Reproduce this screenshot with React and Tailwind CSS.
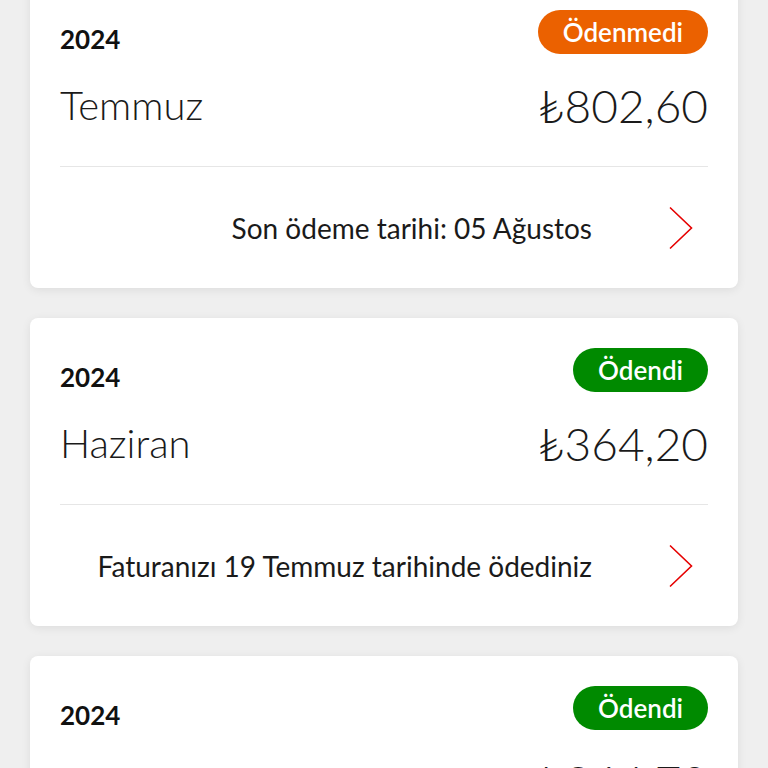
const bills = [
  {
    year: "2024",
    month: "Temmuz",
    amount: "₺802,60",
    status: "Ödenmedi",
    paid: false,
    note: "Son ödeme tarihi: 05 Ağustos",
  },
  {
    year: "2024",
    month: "Haziran",
    amount: "₺364,20",
    status: "Ödendi",
    paid: true,
    note: "Faturanızı 19 Temmuz tarihinde ödediniz",
  },
  {
    year: "2024",
    month: "Mayıs",
    amount: "₺364,70",
    status: "Ödendi",
    paid: true,
    note: "Faturanızı 18 Haziran tarihinde ödediniz",
  },
];

function Chevron() {
  return (
    <svg width="26" height="44" viewBox="0 0 26 44" fill="none" className="shrink-0">
      <path d="M2 1.5 L23.5 22 L2 42.5" stroke="#e60000" strokeWidth="1.6" />
    </svg>
  );
}

function BillCard({ bill }) {
  return (
    <div className="bg-white rounded-[8px] shadow-[0_2px_10px_rgba(0,0,0,0.08)] px-[30px] pt-[30px] h-[308px] flex flex-col">
      <div className="flex items-end justify-between">
        <span className="text-[26px] leading-none font-bold text-[#111] pb-[2px]">{bill.year}</span>
        <span
          className={`h-[44px] px-[25px] rounded-full flex items-center text-white text-[26px] font-semibold ${
            bill.paid ? "bg-[#008a00]" : "bg-[#eb6100]"
          }`}
        >
          {bill.status}
        </span>
      </div>
      <div className="flex items-center justify-between mt-[25px] h-[52px]">
        <span className="text-[40px] font-light text-[#1a1a1a]">{bill.month}</span>
        <span className="text-[46px] font-light text-[#1a1a1a]">{bill.amount}</span>
      </div>
      <div className="border-t border-[#e6e6e6] mt-[35px]" />
      <div className="flex-1 flex items-center justify-end gap-[76px] pr-[14px]">
        <span className="text-[28px] text-[#1a1a1a]">{bill.note}</span>
        <Chevron />
      </div>
    </div>
  );
}

export default function App() {
  return (
    <div className="min-h-[768px] h-[768px] overflow-hidden bg-[#efefef] px-[30px] font-['Lato',sans-serif]">
      <div className="-mt-[20px] flex flex-col gap-[30px]">
        {bills.map((bill) => (
          <BillCard key={bill.month} bill={bill} />
        ))}
      </div>
    </div>
  );
}
